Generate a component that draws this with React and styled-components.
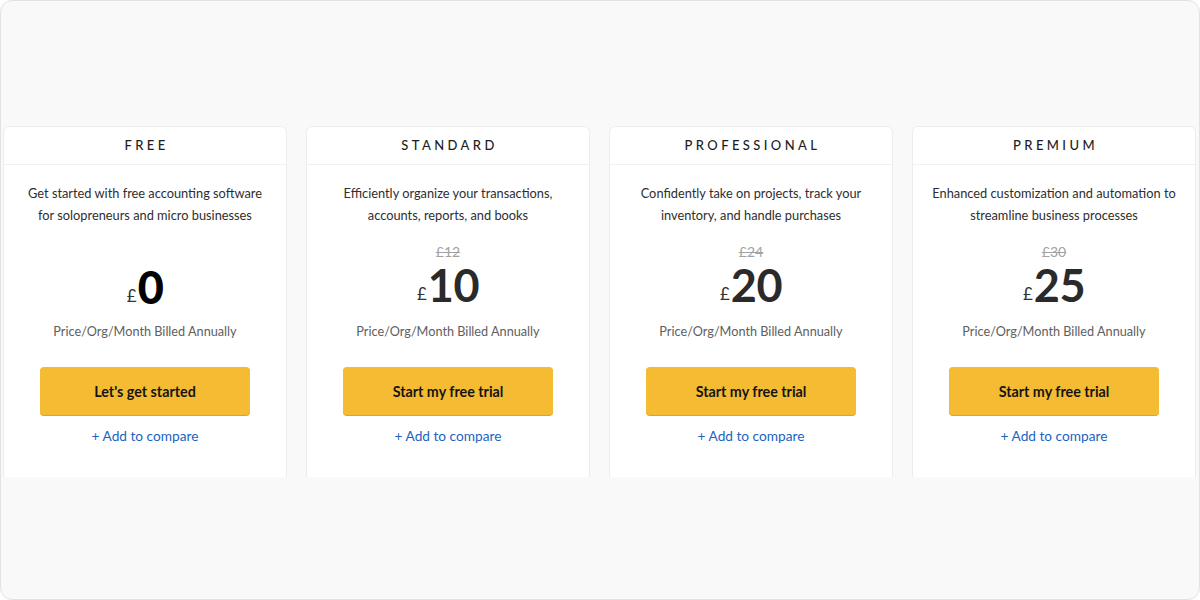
import React from 'react'
import styled, { createGlobalStyle } from 'styled-components'

const GlobalStyle = createGlobalStyle`
  html, body {
    margin: 0;
    padding: 0;
    background: #ffffff;
  }
  body {
    font-family: Lato, "Open Sans", Arial, sans-serif;
  }
  * {
    box-sizing: border-box;
  }
`

const Frame = styled.div`
  width: 1200px;
  height: 600px;
  background: #f9f9f9;
  border: 1px solid #e2e2e2;
  border-radius: 12px;
  padding: 125px 3px 0 2px;
  overflow: hidden;
`

const Plans = styled.div`
  display: grid;
  grid-template-columns: repeat(4, 1fr);
  column-gap: 19px;
`

const Card = styled.div`
  background: #ffffff;
  border: 1px solid #ededed;
  border-bottom: none;
  border-radius: 6px 6px 0 0;
  height: 351px;
  display: flex;
  flex-direction: column;
  align-items: center;
  text-align: center;
`

const CardHead = styled.div`
  width: 100%;
  height: 38px;
  display: flex;
  align-items: center;
  justify-content: center;
  border-bottom: 1px solid #f0f0f0;
  font-size: 13px;
  font-weight: 500;
  letter-spacing: 3.4px;
  color: #1d1d1d;
  padding: 0 0 2px 3px;
`

const Desc = styled.p`
  margin: 17px 0 0;
  padding: 0 18px;
  font-size: 12.8px;
  line-height: 22px;
  color: #2e2e2e;
  height: 44px;
`

const OldPrice = styled.div`
  margin-top: 16px;
  font-size: 14px;
  line-height: 20px;
  color: #a2a2a2;
  text-decoration: line-through;
  visibility: ${p => (p.$hidden ? 'hidden' : 'visible')};
`

const Price = styled.div`
  display: flex;
  align-items: flex-end;
  justify-content: center;
  height: 48px;
  line-height: 1;
  color: ${p => (p.$dark ? '#000' : '#2a2a2a')};
  transform: translateY(${p => (p.$dark ? '0' : '-2px')});
`

const Currency = styled.span`
  font-size: 17px;
  font-weight: 400;
  margin-right: 1px;
  padding-bottom: 6px;
  color: #333;
`

const Amount = styled.span`
  font-size: 45px;
  font-weight: ${p => (p.$dark ? 900 : 700)};
  letter-spacing: -0.5px;
`

const Billing = styled.div`
  margin-top: 11px;
  font-size: 12.7px;
  line-height: 20px;
  color: #606060;
`

const CtaButton = styled.button`
  margin-top: 26px;
  width: 210px;
  height: 48px;
  border: none;
  border-radius: 4px;
  background: #f4bb33;
  box-shadow: 0 1px 0 #dda524;
  font-family: Lato, "Open Sans", Arial, sans-serif;
  font-size: 14.3px;
  font-weight: 700;
  color: #141414;
  cursor: pointer;
`

const CompareLink = styled.a`
  margin-top: 11px;
  font-size: 13.7px;
  line-height: 20px;
  color: #1b63c0;
  text-decoration: none;
  cursor: pointer;
`

const plans = [
  {
    name: 'FREE',
    desc: 'Get started with free accounting software for solopreneurs and micro businesses',
    price: '0',
    cta: "Let's get started",
    free: true,
  },
  {
    name: 'STANDARD',
    desc: 'Efficiently organize your transactions, accounts, reports, and books',
    old: '£12',
    price: '10',
    cta: 'Start my free trial',
  },
  {
    name: 'PROFESSIONAL',
    desc: 'Confidently take on projects, track your inventory, and handle purchases',
    old: '£24',
    price: '20',
    cta: 'Start my free trial',
  },
  {
    name: 'PREMIUM',
    desc: 'Enhanced customization and automation to streamline business processes',
    old: '£30',
    price: '25',
    cta: 'Start my free trial',
  },
]

function PlanCard({ plan }) {
  return (
    <Card>
      <CardHead>{plan.name}</CardHead>
      <Desc>{plan.desc}</Desc>
      <OldPrice $hidden={!plan.old}>{plan.old || '£0'}</OldPrice>
      <Price $dark={plan.free}>
        <Currency>£</Currency>
        <Amount $dark={plan.free}>{plan.price}</Amount>
      </Price>
      <Billing>Price/Org/Month Billed Annually</Billing>
      <CtaButton>{plan.cta}</CtaButton>
      <CompareLink>+ Add to compare</CompareLink>
    </Card>
  )
}

export default function App() {
  return (
    <>
      <GlobalStyle />
      <Frame>
        <Plans>
          {plans.map(p => (
            <PlanCard key={p.name} plan={p} />
          ))}
        </Plans>
      </Frame>
    </>
  )
}
